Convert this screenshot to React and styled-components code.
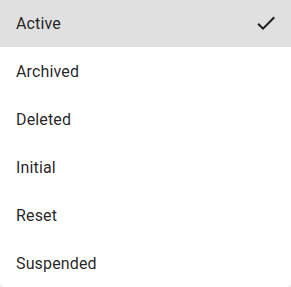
import React, { useState } from 'react'
import styled, { createGlobalStyle } from 'styled-components'

const GlobalStyle = createGlobalStyle`
    html, body {
        margin: 0;
        padding: 0;
        background: #fff;
    }
    body {
        font-family: Roboto, "Liberation Sans", sans-serif;
        overflow: hidden;
    }
`

// STYLES
const Paper = styled.div`
    width: 291px;
    height: 287px;
    background: #fff;
    border-radius: 0 0 4px 4px;
    box-shadow: 0 1px 2px rgba(0, 0, 0, 0.18);
    overflow: hidden;
`

const List = styled.ul`
    list-style: none;
    margin: -1px 0 0 0;
    padding: 0;
`

const Item = styled.li`
    height: 48px;
    display: flex;
    align-items: center;
    justify-content: space-between;
    padding: 2px 13px 0 16px;
    box-sizing: border-box;
    font-size: 16px;
    line-height: 1.5;
    letter-spacing: 0.15px;
    color: rgba(0, 0, 0, 0.87);
    background-color: ${props => (props.selected ? '#e0e0e0' : 'transparent')};
    cursor: pointer;

    & svg {
        margin-top: -2px;
    }
`

const CheckIcon = () => (
    <svg width="24" height="24" viewBox="0 0 24 24" fill="rgba(0,0,0,0.87)">
        <path d="M9 16.17 4.83 12l-1.42 1.41L9 19 21 7l-1.41-1.41z" />
    </svg>
)

const options = ['Active', 'Archived', 'Deleted', 'Initial', 'Reset', 'Suspended']

function App() {
    const [selected, setSelected] = useState('Active')

    return (
        <>
            <GlobalStyle />
            <Paper>
                <List>
                    {options.map(opt => (
                        <Item
                            key={opt}
                            selected={opt === selected}
                            onClick={() => setSelected(opt)}
                        >
                            {opt}
                            {opt === selected && <CheckIcon />}
                        </Item>
                    ))}
                </List>
            </Paper>
        </>
    )
}

export default App
